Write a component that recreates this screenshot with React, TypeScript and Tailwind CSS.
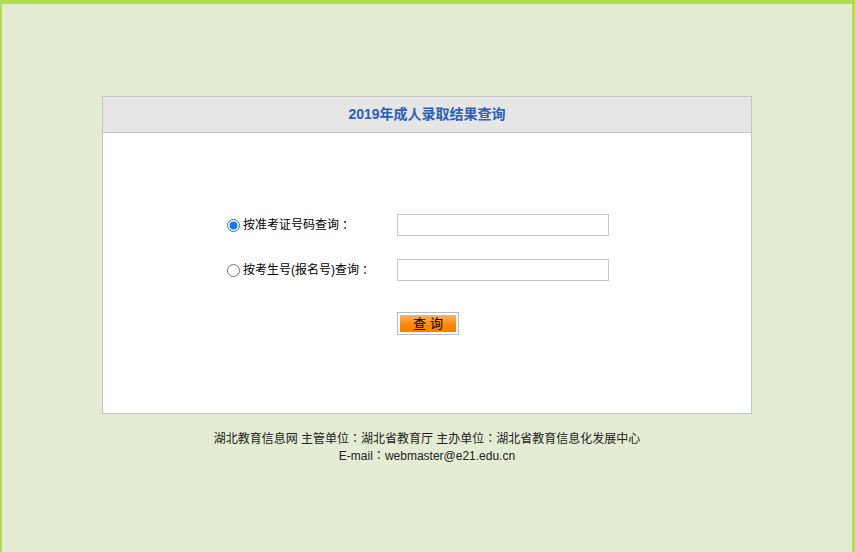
import { useState } from 'react';

const Colon = () => (
  <span className="leading-none" style={{ fontFamily: '"Noto Sans CJK TC", sans-serif' }}>：</span>
);

const App = () => {
  const [mode, setMode] = useState('zkz');

  return (
    <div
      className="min-h-[552px] bg-[#e4ecd3] border-t-4 border-l-2 border-r-[3px] border-[#b3dc4e] text-[#333]"
      style={{ fontFamily: '"Liberation Sans", "Noto Sans CJK SC", sans-serif' }}
    >
      <div className="pt-[92px] flex flex-col items-center">
        {/* Panel */}
        <div className="w-[650px] bg-white border border-[#c4c4c4]">
          <div className="h-[36px] bg-[#e6e6e6] border-b border-[#c4c4c4] flex items-center justify-center">
            <span className="text-[14px] font-bold text-[#2a60b8]">2019年成人录取结果查询</span>
          </div>
          <div className="h-[280px] pt-[81px] pl-[124px]">
            <div className="flex items-center h-[22px]">
              <label className="flex items-center w-[170px] text-[12px] text-black cursor-pointer">
                <input
                  type="radio"
                  name="mode"
                  className="w-[13px] h-[13px] m-0 mr-[3px] accent-[#1a73e8]"
                  checked={mode === 'zkz'}
                  onChange={() => setMode('zkz')}
                />
                按准考证号码查询<Colon />
              </label>
              <input type="text" className="w-[212px] h-[22px] border border-[#c8c8c8] bg-white outline-none" />
            </div>
            <div className="flex items-center h-[22px] mt-[23px]">
              <label className="flex items-center w-[170px] text-[12px] text-black cursor-pointer">
                <input
                  type="radio"
                  name="mode"
                  className="w-[13px] h-[13px] m-0 mr-[3px] accent-[#1a73e8]"
                  checked={mode === 'ksh'}
                  onChange={() => setMode('ksh')}
                />
                按考生号(报名号)查询<Colon />
              </label>
              <input type="text" className="w-[212px] h-[22px] border border-[#c8c8c8] bg-white outline-none" />
            </div>
            <div className="pl-[170px] mt-[30px]">
              <button className="w-[62px] h-[23px] border border-[#bdbdbd] bg-white p-[2px]">
                <span className="flex items-center justify-center w-full h-full bg-gradient-to-b from-[#ffb45c] via-[#ff8c00] to-[#f57d00] text-[13px] text-black tracking-[4px] pl-[4px]">
                  查询
                </span>
              </button>
            </div>
          </div>
        </div>

        {/* Footer */}
        <div className="mt-[17px] text-center text-[12px] leading-[17px] text-[#222]">
          <p>湖北教育信息网 主管单位<Colon />湖北省教育厅 主办单位<Colon />湖北省教育信息化发展中心</p>
          <p>E-mail<Colon />webmaster@e21.edu.cn</p>
        </div>
      </div>
    </div>
  );
};

export default App;
